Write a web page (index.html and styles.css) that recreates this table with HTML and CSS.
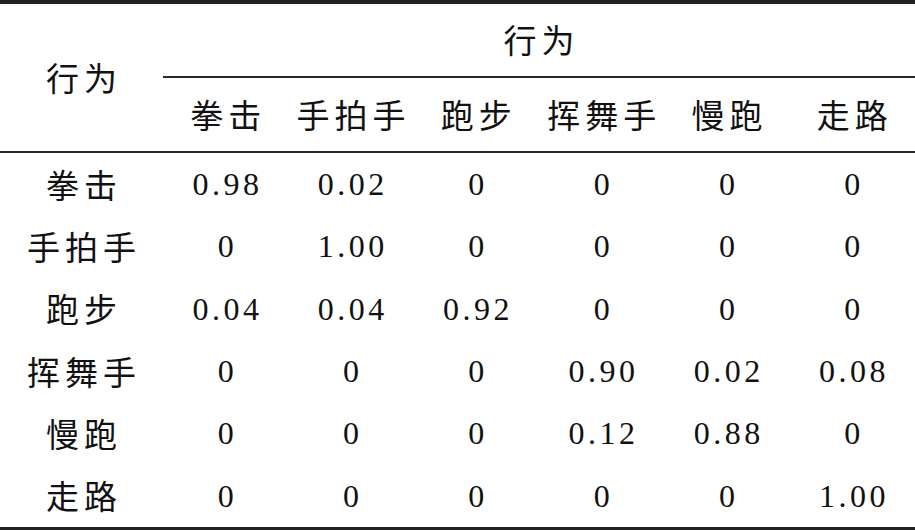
FILE: index.html
```html
<!DOCTYPE html>
<html lang="zh">
<head>
<meta charset="utf-8">
<title>行为识别混淆矩阵</title>
<link rel="stylesheet" href="styles.css">
</head>
<body>
<table class="matrix">
  <colgroup>
    <col class="col-label">
    <col class="col-data"><col class="col-data"><col class="col-data">
    <col class="col-data"><col class="col-data"><col class="col-data">
  </colgroup>
  <thead>
    <tr class="head-top">
      <th class="zh corner" rowspan="2">行为</th>
      <th class="zh group" colspan="6">行为</th>
    </tr>
    <tr class="head-sub">
      <th class="zh">拳击</th>
      <th class="zh">手拍手</th>
      <th class="zh">跑步</th>
      <th class="zh">挥舞手</th>
      <th class="zh">慢跑</th>
      <th class="zh">走路</th>
    </tr>
  </thead>
  <tbody>
    <tr><th class="zh">拳击</th><td>0.98</td><td>0.02</td><td>0</td><td>0</td><td>0</td><td>0</td></tr>
    <tr><th class="zh">手拍手</th><td>0</td><td>1.00</td><td>0</td><td>0</td><td>0</td><td>0</td></tr>
    <tr><th class="zh">跑步</th><td>0.04</td><td>0.04</td><td>0.92</td><td>0</td><td>0</td><td>0</td></tr>
    <tr><th class="zh">挥舞手</th><td>0</td><td>0</td><td>0</td><td>0.90</td><td>0.02</td><td>0.08</td></tr>
    <tr><th class="zh">慢跑</th><td>0</td><td>0</td><td>0</td><td>0.12</td><td>0.88</td><td>0</td></tr>
    <tr><th class="zh">走路</th><td>0</td><td>0</td><td>0</td><td>0</td><td>0</td><td>1.00</td></tr>
  </tbody>
</table>
</body>
</html>
```
FILE: styles.css
```css
html, body {
  margin: 0;
  padding: 0;
  background: #ffffff;
}

.matrix {
  width: 915px;
  table-layout: fixed;
  border-collapse: separate;
  border-spacing: 0;
  border-top: 4px solid #222;
  border-bottom: 4px solid #222;
  font-family: "Liberation Serif", "Noto Sans CJK SC", serif;
  color: #111;
}

.col-label { width: 163px; }
.col-data { width: 125.33px; }

.matrix th,
.matrix td {
  padding: 0;
  text-align: center;
  vertical-align: middle;
  font-weight: 400;
  line-height: 1;
  white-space: nowrap;
}

.matrix td {
  font-size: 32px;
  letter-spacing: 3.5px;
  padding-left: 3.5px;
}

.zh {
  font-family: "Noto Sans CJK SC", sans-serif;
  font-size: 33px;
  font-weight: 300;
  letter-spacing: 5px;
  padding-left: 5px !important;
}

.head-top { height: 74px; }
.head-sub { height: 75px; }

.group {
  border-bottom: 2px solid #2a2a2a;
  padding-bottom: 2px !important;
}

.corner,
.head-sub th {
  border-bottom: 2px solid #2a2a2a;
}

.matrix tbody tr { height: 62.33px; }
```
